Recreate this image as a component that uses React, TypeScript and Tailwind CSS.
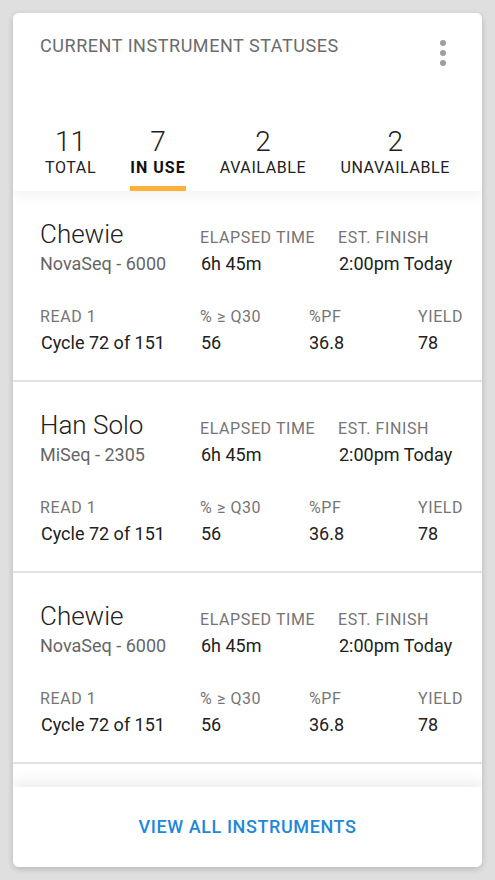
import React from "react";

const stats = [
  { n: "11", label: "TOTAL", active: false },
  { n: "7", label: "IN USE", active: true },
  { n: "2", label: "AVAILABLE", active: false },
  { n: "2", label: "UNAVAILABLE", active: false },
];

const items = [
  { name: "Chewie", model: "NovaSeq - 6000" },
  { name: "Han Solo", model: "MiSeq - 2305" },
  { name: "Chewie", model: "NovaSeq - 6000" },
];

function Item({ name, model }: { name: string; model: string }) {
  return (
    <div className="h-[191px] shrink-0 border-b-2 border-[#e2e2e2] pl-[27px] pt-[27px]">
      <div className="flex items-baseline">
        <div className="w-[160px] text-[26px] leading-8 font-light text-[#212121]">{name}</div>
        <div className="w-[138px] text-[16px] leading-5 tracking-[0.6px] text-[#757575]">ELAPSED TIME</div>
        <div className="text-[16px] leading-5 tracking-[0.6px] text-[#757575]">EST. FINISH</div>
      </div>
      <div className="mt-[2px] flex text-[18px] leading-6">
        <div className="w-[160px] text-[#666666]">{model}</div>
        <div className="w-[138px] pl-[1px] text-[#212121]">6h 45m</div>
        <div className="pl-[1px] text-[#212121]">2:00pm Today</div>
      </div>
      <div className="mt-[31px] flex text-[16px] leading-5 tracking-[0.6px] text-[#757575]">
        <div className="w-[160px]">READ 1</div>
        <div className="w-[109px]">% ≥ Q30</div>
        <div className="w-[109px]">%PF</div>
        <div>YIELD</div>
      </div>
      <div className="mt-[4px] flex text-[18px] leading-6 text-[#212121]">
        <div className="w-[160px] pl-[1px]">Cycle 72 of 151</div>
        <div className="w-[109px] pl-[1px]">56</div>
        <div className="w-[109px]">36.8</div>
        <div>78</div>
      </div>
    </div>
  );
}

export default function App() {
  return (
    <div
      className="min-h-[880px] w-full bg-[#dfdfdf] pt-[13px] px-[13px]"
      style={{ fontFamily: "Roboto, 'Noto Sans', sans-serif" }}
    >
      <div className="flex h-[854px] flex-col overflow-hidden rounded-[6px] bg-white shadow-[0_2px_6px_rgba(0,0,0,0.18)]">
        <div className="relative z-10 shrink-0 bg-white shadow-[0_4px_12px_rgba(0,0,0,0.06)]">
          <div className="flex items-start justify-between pl-[27px] pr-[36px] pt-[21px]">
            <div className="text-[18px] leading-6 tracking-[0.55px] text-[#6b6b6b]">
              CURRENT INSTRUMENT STATUSES
            </div>
            <div className="mt-[6px] flex flex-col gap-[4px]">
              <span className="block h-[6px] w-[6px] rounded-full bg-[#9e9e9e]" />
              <span className="block h-[6px] w-[6px] rounded-full bg-[#9e9e9e]" />
              <span className="block h-[6px] w-[6px] rounded-full bg-[#9e9e9e]" />
            </div>
          </div>
          <div className="mt-[60px] flex justify-between px-[32px]">
            {stats.map((s, i) => (
              <div key={i} className="flex flex-col items-center">
                <div className="text-[28px] leading-8 font-light text-[#212121]">{s.n}</div>
                <div
                  className={
                    s.active
                      ? "text-[16px] leading-5 font-bold tracking-[1px] text-[#111111]"
                      : "text-[16px] leading-5 tracking-[0.6px] text-[#222222]"
                  }
                >
                  {s.label}
                </div>
                <div className={s.active ? "mt-[8px] h-[5px] w-full bg-[#ffb23a]" : "mt-[8px] h-[5px] w-full"} />
              </div>
            ))}
          </div>
        </div>
        <div className="flex min-h-0 flex-1 flex-col overflow-hidden">
          {items.map((it, i) => (
            <Item key={i} name={it.name} model={it.model} />
          ))}
          <div className="flex-1 bg-white" />
        </div>
        <div className="relative z-10 flex h-[80px] shrink-0 items-center justify-center bg-white shadow-[0_-6px_14px_rgba(0,0,0,0.07)]">
          <span className="text-[18px] leading-6 font-medium tracking-[0.6px] text-[#1f88d9]">
            VIEW ALL INSTRUMENTS
          </span>
        </div>
      </div>
    </div>
  );
}
